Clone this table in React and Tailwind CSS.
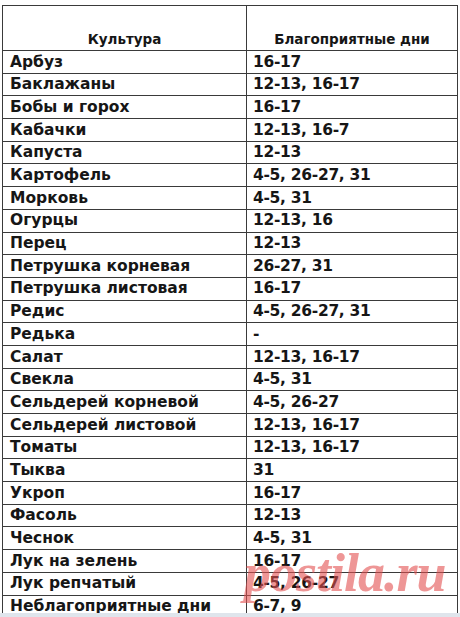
const rows = [
  ["Арбуз", "16-17"],
  ["Баклажаны", "12-13, 16-17"],
  ["Бобы и горох", "16-17"],
  ["Кабачки", "12-13, 16-7"],
  ["Капуста", "12-13"],
  ["Картофель", "4-5, 26-27, 31"],
  ["Морковь", "4-5, 31"],
  ["Огурцы", "12-13, 16"],
  ["Перец", "12-13"],
  ["Петрушка корневая", "26-27, 31"],
  ["Петрушка листовая", "16-17"],
  ["Редис", "4-5, 26-27, 31"],
  ["Редька", "-"],
  ["Салат", "12-13, 16-17"],
  ["Свекла", "4-5, 31"],
  ["Сельдерей корневой", "4-5, 26-27"],
  ["Сельдерей листовой", "12-13, 16-17"],
  ["Томаты", "12-13, 16-17"],
  ["Тыква", "31"],
  ["Укроп", "16-17"],
  ["Фасоль", "12-13"],
  ["Чеснок", "4-5, 31"],
  ["Лук на зелень", "16-17"],
  ["Лук репчатый", "4-5, 26-27"],
  ["Неблагоприятные дни", "6-7, 9"],
];

export default function App() {
  return (
    <div className="relative w-[460px] h-[617px] overflow-hidden bg-white font-['DejaVu_Sans',sans-serif] font-bold text-[#161616]">
      <div className="pt-[5px] pl-[2px]">
        <div className="w-[456px] border-[1.5px] border-[#3a3a3a] border-b-0">
          <div className="flex h-[45px] border-b-[1.5px] border-[#3a3a3a] text-[13.5px] leading-none">
            <div className="w-[244px] flex items-end justify-center pb-[4px] border-r-[1.5px] border-[#3a3a3a]">
              Культура
            </div>
            <div className="flex-1 flex items-end justify-center pb-[4px]">
              Благоприятные дни
            </div>
          </div>
          {rows.map(([name, days]) => (
            <div
              key={name}
              className="flex h-[22.7px] border-b-[1.5px] border-[#3a3a3a] text-[15.5px] leading-none"
            >
              <div className="w-[244px] flex items-center pl-[7px] pt-[1px] border-r-[1.5px] border-[#3a3a3a]">
                {name}
              </div>
              <div className="flex-1 flex items-center pl-[6px] pt-[1px] tracking-[-0.3px]">{days}</div>
            </div>
          ))}
        </div>
      </div>
      <div className="absolute left-[244px] top-[546px] text-[54px] italic font-bold leading-none tracking-[-1px] text-[rgba(226,80,80,0.6)] font-['Liberation_Serif',serif]">
        postila.ru
      </div>
      <div className="absolute left-0 right-0 bottom-0 h-[4px] bg-[#dfe5ec]" />
    </div>
  );
}
